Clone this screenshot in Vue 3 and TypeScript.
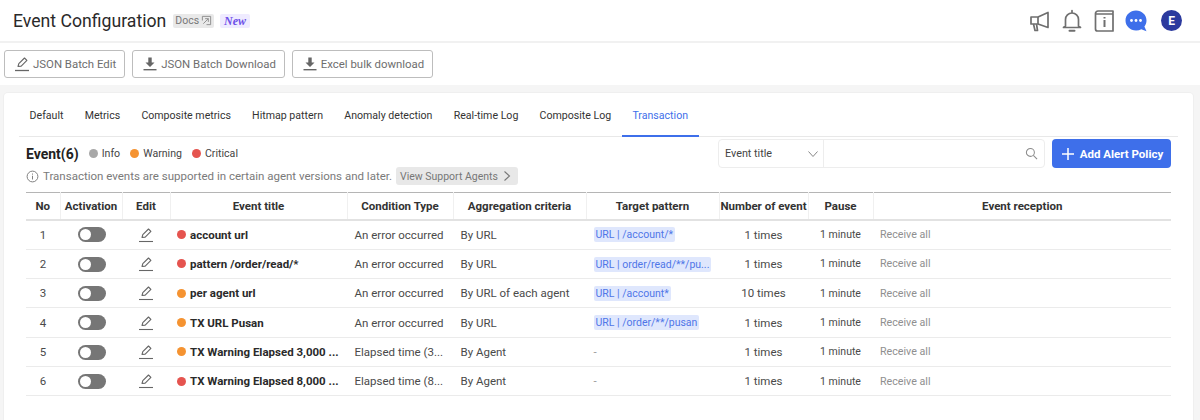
<script setup lang="ts">
interface EventRow {
  no: number
  level: 'warning' | 'critical'
  title: string
  condition: string
  aggregation: string
  pattern: string
  count: number
}

const tabs = ['Default', 'Metrics', 'Composite metrics', 'Hitmap pattern', 'Anomaly detection', 'Real-time Log', 'Composite Log', 'Transaction']

const columns = ['No', 'Activation', 'Edit', 'Event title', 'Condition Type', 'Aggregation criteria', 'Target pattern', 'Number of event', 'Pause', 'Event reception']

const rows: EventRow[] = [
  { no: 1, level: 'critical', title: 'account url', condition: 'An error occurred', aggregation: 'By URL', pattern: 'URL | /account/*', count: 1 },
  { no: 2, level: 'critical', title: 'pattern /order/read/*', condition: 'An error occurred', aggregation: 'By URL', pattern: 'URL | order/read/**/pu...', count: 1 },
  { no: 3, level: 'warning', title: 'per agent url', condition: 'An error occurred', aggregation: 'By URL of each agent', pattern: 'URL | /account*', count: 10 },
  { no: 4, level: 'warning', title: 'TX URL Pusan', condition: 'An error occurred', aggregation: 'By URL', pattern: 'URL | /order/**/pusan', count: 1 },
  { no: 5, level: 'warning', title: 'TX Warning Elapsed 3,000 ...', condition: 'Elapsed time (3...', aggregation: 'By Agent', pattern: '', count: 1 },
  { no: 6, level: 'critical', title: 'TX Warning Elapsed 8,000 ...', condition: 'Elapsed time (8...', aggregation: 'By Agent', pattern: '', count: 1 },
]
</script>

<template>
  <div class="page">
    <header class="topbar">
      <div class="topbar__left">
        <h1 class="title">Event Configuration</h1>
        <span class="docs">Docs
          <svg width="11" height="11" viewBox="0 0 12 12" fill="none" stroke="#8a8a8a" stroke-width="1">
            <path d="M1.500 6V1.500h9v9H6" />
            <path d="M8 4H4.500M8 4v3.500M8 4L2.500 9.500" />
          </svg>
        </span>
        <span class="new">New</span>
      </div>
      <div class="topbar__icons">
        <svg width="24" height="24" viewBox="0 0 24 24" fill="none" stroke="#6f6f6f" stroke-width="1.700" stroke-linejoin="round">
          <path d="M3 8h7l10-4.500v15L10 15H3z" />
          <path d="M10 8v7M5.500 15l1.500 6.500h2.500L8.500 15" />
        </svg>
        <svg width="24" height="24" viewBox="0 0 24 24" fill="none" stroke="#6f6f6f" stroke-width="1.700" stroke-linecap="round">
          <path d="M12 1.500v2M5.500 17V10.500a6.500 6.500 0 0 1 13 0V17l2 1.500H3.500z" stroke-linejoin="round" />
          <path d="M9.500 21.800h5" stroke-width="2" />
        </svg>
        <svg width="24" height="24" viewBox="0 0 24 24" fill="none" stroke="#6f6f6f" stroke-width="1.700">
          <path d="M6 2h15v2.500M3.500 5h17.500v17H5.500a2 2 0 0 1-2-2V4.500A2.500 2.500 0 0 1 6 2" stroke-linejoin="round" />
          <path d="M12.500 11v7" stroke-width="2" />
          <path d="M12.500 8v1.500" stroke-width="2" />
        </svg>
        <svg width="24" height="24" viewBox="0 0 24 24">
          <path d="M12 1.500c5.800 0 10.500 4.400 10.500 10 0 2.300-.8 4.400-2.100 6.100l2.100 4.700-5.200-2a11 11 0 0 1-5.300 1.200c-5.800 0-10.500-4.400-10.500-10S6.200 1.500 12 1.500z" fill="#3e6fea" />
          <circle cx="7.500" cy="11.500" r="1.400" fill="#fff" />
          <circle cx="12" cy="11.500" r="1.400" fill="#fff" />
          <circle cx="16.500" cy="11.500" r="1.400" fill="#fff" />
        </svg>
        <span class="avatar">E</span>
      </div>
    </header>

    <div class="toolbar">
      <button type="button" class="tool-btn">
        <svg width="16" height="16" viewBox="0 0 16 16" fill="none" stroke="#666" stroke-width="1.100">
          <path d="M4 10.500l.8-2.800L10.500 2l2.400 2.400-5.700 5.700z" stroke-linejoin="round" />
          <path d="M1 14.500h14" stroke-width="1.300" />
        </svg>
        JSON Batch Edit
      </button>
      <button type="button" class="tool-btn">
        <svg width="16" height="16" viewBox="0 0 16 16" fill="#666">
          <path d="M6.300 1.500h3.400v5h2.800L8 11 3.500 6.500h2.800z" />
          <rect x="1.500" y="13" width="13" height="1.400" />
        </svg>
        JSON Batch Download
      </button>
      <button type="button" class="tool-btn">
        <svg width="16" height="16" viewBox="0 0 16 16" fill="#666">
          <path d="M6.300 1.500h3.400v5h2.800L8 11 3.500 6.500h2.800z" />
          <rect x="1.500" y="13" width="13" height="1.400" />
        </svg>
        Excel bulk download
      </button>
    </div>

    <main class="content">
      <section class="card">
        <nav class="tabs">
          <a v-for="tab in tabs" :key="tab" class="tab" :class="{ 'tab--active': tab === 'Transaction' }">{{ tab }}</a>
        </nav>

        <div class="head">
          <div class="head__info">
            <div class="legend">
              <strong class="legend__title">Event(6)</strong>
              <span class="legend__item"><i class="dot dot--info" />Info</span>
              <span class="legend__item"><i class="dot dot--warning" />Warning</span>
              <span class="legend__item"><i class="dot dot--critical" />Critical</span>
            </div>
            <div class="notice">
              <svg width="13" height="13" viewBox="0 0 14 14" fill="none" stroke="#777" stroke-width="1">
                <circle cx="7" cy="7" r="5.800" />
                <path d="M7 6.200v4M7 3.800v1.200" />
              </svg>
              <span>Transaction events are supported in certain agent versions and later.</span>
              <span class="notice__link">View Support Agents
                <svg width="10" height="12" viewBox="0 0 10 12" fill="none" stroke="#777" stroke-width="1.100">
                  <path d="M2.500 1.500L7.500 6l-5 4.500" />
                </svg>
              </span>
            </div>
          </div>
          <div class="head__actions">
            <div class="search">
              <div class="search__select">
                Event title
                <svg width="12" height="8" viewBox="0 0 12 8" fill="none" stroke="#888" stroke-width="1">
                  <path d="M1.500 1.500L6 6.500l4.500-5" />
                </svg>
              </div>
              <div class="search__input">
                <svg width="13" height="13" viewBox="0 0 14 14" fill="none" stroke="#8a8a8a" stroke-width="1.100">
                  <circle cx="5.800" cy="5.800" r="4.300" />
                  <path d="M9 9l4 4" />
                </svg>
              </div>
            </div>
            <button type="button" class="add-btn">
              <svg width="14" height="14" viewBox="0 0 14 14" stroke="#fff" stroke-width="1.500">
                <path d="M7 1v12M1 7h12" />
              </svg>
              Add Alert Policy
            </button>
          </div>
        </div>

        <table class="grid">
          <colgroup>
            <col style="width: 34px" />
            <col style="width: 62px" />
            <col style="width: 48px" />
            <col style="width: 177px" />
            <col style="width: 106px" />
            <col style="width: 133px" />
            <col style="width: 133px" />
            <col style="width: 89px" />
            <col style="width: 65px" />
            <col />
          </colgroup>
          <thead>
            <tr>
              <th v-for="col in columns" :key="col">{{ col }}</th>
            </tr>
          </thead>
          <tbody>
            <tr v-for="row in rows" :key="row.no">
              <td class="center">{{ row.no }}</td>
              <td class="center"><span class="switch"><i /></span></td>
              <td class="center">
                <svg class="edit" width="16" height="16" viewBox="0 0 16 16" fill="none" stroke="#666" stroke-width="1.100">
                  <path d="M4 10.500l.8-2.800L10.500 2l2.400 2.400-5.700 5.700z" stroke-linejoin="round" />
                  <path d="M1 14.500h14" />
                </svg>
              </td>
              <td>
                <div class="event-title">
                  <i class="dot" :class="`dot--${row.level}`" />
                  <span>{{ row.title }}</span>
                </div>
              </td>
              <td class="cell-text">{{ row.condition }}</td>
              <td class="cell-text">{{ row.aggregation }}</td>
              <td class="cell-text">
                <span v-if="row.pattern" class="pattern">{{ row.pattern }}</span>
                <span v-else class="dash">-</span>
              </td>
              <td class="center">{{ row.count }} times</td>
              <td class="center pause">1 minute</td>
              <td class="reception">Receive all</td>
            </tr>
          </tbody>
        </table>
      </section>
    </main>
  </div>
</template>

<style>
html, body {
  margin: 0;
  background: #f5f5f5;
}
</style>

<style scoped>
.page {
  width: 1200px;
  height: 420px;
  overflow: hidden;
  font-family: Roboto, "Liberation Sans", sans-serif;
  color: #2b2b2b;
  display: flex;
  flex-direction: column;
}

.topbar {
  height: 41px;
  flex-shrink: 0;
  background: #fff;
  border-bottom: 2px solid #f1f1f1;
  display: flex;
  align-items: center;
  justify-content: space-between;
  padding: 0 18px 0 13px;
}

.topbar__left {
  display: flex;
  align-items: center;
}

.title {
  margin: 0;
  font-size: 17.650px;
  font-weight: 400;
  color: #2a2a2a;
}

.docs {
  margin-left: 7px;
  height: 14px;
  padding: 0 2px;
  display: inline-flex;
  align-items: center;
  gap: 2px;
  background: #e9e9e9;
  border-radius: 2px;
  font-size: 10.500px;
  color: #777;
}

.new {
  margin-left: 6px;
  height: 14px;
  padding: 0 4px;
  background: #efebff;
  border-radius: 2px;
  font: italic 700 12px/14px "Liberation Serif", serif;
  color: #6d50e8;
}

.topbar__icons {
  display: flex;
  align-items: center;
  gap: 8px;
}

.avatar {
  width: 21px;
  height: 21px;
  margin-left: 5px;
  border-radius: 50%;
  background: #2c3a9e;
  color: #fff;
  font-size: 12px;
  font-weight: 700;
  display: flex;
  align-items: center;
  justify-content: center;
}

.toolbar {
  height: 42px;
  flex-shrink: 0;
  background: #fff;
  display: flex;
  align-items: center;
  gap: 7px;
  padding: 0 4px;
}

.tool-btn {
  height: 28px;
  padding: 0 8px 0 9px;
  display: flex;
  align-items: center;
  gap: 3px;
  background: #fff;
  border: 1px solid #bdbdbd;
  border-radius: 3px;
  font-family: inherit;
  font-size: 11.400px;
  color: #6e6e6e;
}

.content {
  flex: 1;
  padding: 8px 7px 0 4px;
}

.card {
  height: 340px;
  background: #fff;
  border-radius: 4px;
  box-shadow: 0 0 0 1px #efefef;
  padding: 0 22px;
}

.tabs {
  height: 44px;
  margin: 0 -7px;
  border-bottom: 1px solid #e8e8e8;
  box-sizing: border-box;
  display: flex;
  align-items: stretch;
}

.tab {
  padding: 2px 10.600px 0;
  display: flex;
  align-items: center;
  font-size: 10.600px;
  color: #333;
  margin-bottom: -1px;
  border-bottom: 2px solid transparent;
}

.tab--active {
  color: #3e6fea;
  border-bottom-color: #3e6fea;
}

.head {
  height: 55px;
  display: flex;
  justify-content: space-between;
}

.head__info {
  padding-top: 8px;
}

.legend {
  display: flex;
  align-items: center;
  height: 17px;
}

.legend__title {
  font-size: 14px;
  font-weight: 700;
  color: #222;
  margin-right: 10px;
}

.legend__item {
  display: flex;
  align-items: center;
  gap: 4px;
  font-size: 10.600px;
  color: #444;
  margin-right: 10px;
}

.dot {
  display: inline-block;
  flex-shrink: 0;
  width: 9px;
  height: 9px;
  border-radius: 50%;
}

.dot--info {
  background: #a8a8a8;
}

.dot--warning {
  background: #f59331;
}

.dot--critical {
  background: #e5544f;
}

.notice {
  margin-top: 5px;
  display: flex;
  align-items: center;
  gap: 4px;
  font-size: 11.500px;
  color: #7a7a7a;
  white-space: nowrap;
}

.notice__link {
  height: 18px;
  padding: 0 6px 0 4px;
  display: inline-flex;
  align-items: center;
  gap: 4px;
  background: #e8e8e8;
  border-radius: 3px;
  font-size: 10.500px;
  color: #777;
}

.head__actions {
  display: flex;
  align-items: flex-start;
  gap: 7px;
  height: 32px;
  padding-top: 2px;
}

.search {
  width: 327px;
  height: 29px;
  box-sizing: border-box;
  display: flex;
  border: 1px solid #ededed;
  border-radius: 4px;
}

.search__select {
  width: 105px;
  flex-shrink: 0;
  box-sizing: border-box;
  padding: 0 4px 0 6px;
  display: flex;
  align-items: center;
  justify-content: space-between;
  border-right: 1px solid #ededed;
  font-size: 10.800px;
  color: #444;
}

.search__input {
  flex: 1;
  display: flex;
  align-items: center;
  justify-content: flex-end;
  padding-right: 6px;
}

.add-btn {
  width: 119px;
  height: 29px;
  display: flex;
  align-items: center;
  justify-content: center;
  gap: 5px;
  padding: 0 0 0 1px;
  background: #3e6fea;
  border: none;
  border-radius: 4px;
  color: #fff;
  font-family: inherit;
  font-size: 11.500px;
  font-weight: 700;
}

.grid {
  width: 1145px;
  table-layout: fixed;
  border-collapse: collapse;
  border-top: 1px solid #b5b5b5;
}

.grid th {
  height: 25.500px;
  padding: 0;
  font-size: 11.500px;
  font-weight: 700;
  color: #333;
  border-right: 1px solid #f0f0f0;
  border-bottom: 2px solid #e2e2e2;
  white-space: nowrap;
}

.grid th:last-child {
  border-right: none;
}

.grid td {
  height: 28.300px;
  padding: 0;
  font-size: 11.500px;
  color: #4a4a4a;
  border-bottom: 1px solid #ebebeb;
  white-space: nowrap;
}

.grid td.center {
  text-align: center;
}

.grid td.pause {
  font-size: 10.500px;
}

.switch {
  display: inline-block;
  vertical-align: middle;
  position: relative;
  width: 28px;
  height: 15px;
  margin-left: 1px;
  border-radius: 8px;
  background: #767676;
}

.switch i {
  position: absolute;
  left: 2px;
  top: 2px;
  width: 11px;
  height: 11px;
  border-radius: 50%;
  background: #fff;
}

.edit {
  display: inline-block;
  vertical-align: middle;
}

.event-title {
  display: flex;
  align-items: center;
  gap: 4px;
  padding: 0 7px;
  font-size: 11.500px;
  font-weight: 700;
  color: #2a2a2a;
}

.grid td.cell-text {
  padding: 0 7.500px;
}

.pattern {
  display: inline-block;
  vertical-align: middle;
  padding: 0 2px;
  line-height: 15px;
  background: #dfe7fd;
  border-radius: 2px;
  font-size: 10.500px;
  color: #4f76e8;
}

.dash {
  color: #999;
}

.grid td.reception {
  padding-left: 7px;
  font-size: 10.700px;
  color: #8f8f8f;
}
</style>
